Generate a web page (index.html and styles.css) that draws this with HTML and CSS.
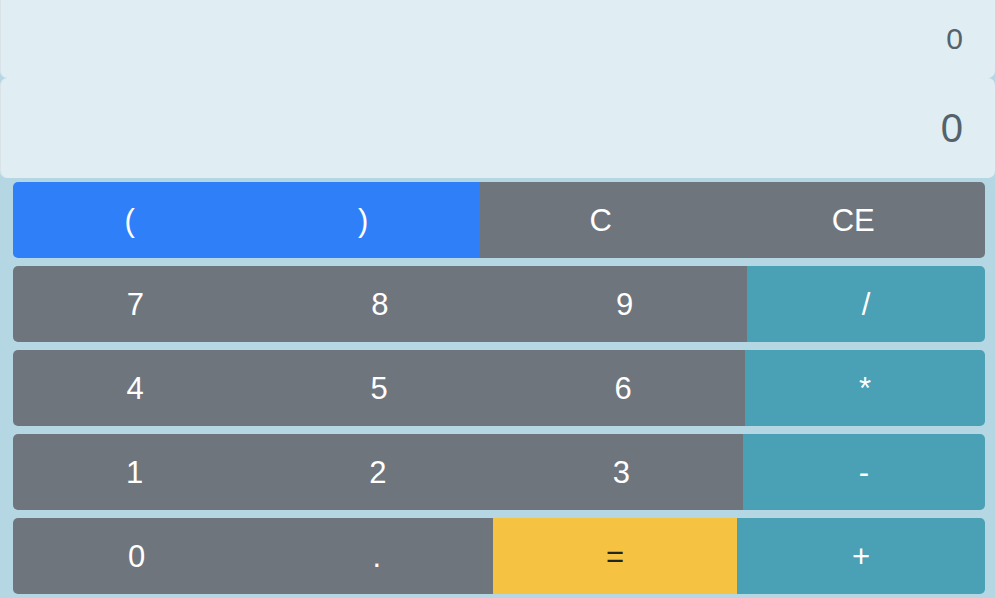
FILE: index.html
```html
<!DOCTYPE html>
<html lang="en">
<head>
<meta charset="utf-8">
<title>Calculator</title>
<link rel="stylesheet" href="styles.css">
</head>
<body>
<div class="calc">
  <div class="display">
    <div class="screen screen-expr">0</div>
    <div class="screen screen-result">0</div>
  </div>
  <div class="keys">
    <div class="row row-1">
      <button class="key key-primary">(</button>
      <button class="key key-primary">)</button>
      <button class="key key-secondary">C</button>
      <button class="key key-secondary">CE</button>
    </div>
    <div class="row row-2">
      <button class="key key-secondary">7</button>
      <button class="key key-secondary">8</button>
      <button class="key key-secondary">9</button>
      <button class="key key-info">/</button>
    </div>
    <div class="row row-3">
      <button class="key key-secondary">4</button>
      <button class="key key-secondary">5</button>
      <button class="key key-secondary">6</button>
      <button class="key key-info">*</button>
    </div>
    <div class="row row-4">
      <button class="key key-secondary">1</button>
      <button class="key key-secondary">2</button>
      <button class="key key-secondary">3</button>
      <button class="key key-info">-</button>
    </div>
    <div class="row row-5">
      <button class="key key-secondary">0</button>
      <button class="key key-secondary">.</button>
      <button class="key key-warning">=</button>
      <button class="key key-info">+</button>
    </div>
  </div>
</div>
</body>
</html>
```
FILE: styles.css
```css
html, body {
  margin: 0;
  padding: 0;
}
body {
  background: #b5d7e3;
  font-family: "Liberation Sans", Arial, sans-serif;
  width: 995px;
  height: 598px;
  overflow: hidden;
}
.calc {
  display: flex;
  flex-direction: column;
}
.display {
  display: flex;
  flex-direction: column;
}
.screen {
  background: #e0edf3;
  color: #53626b;
  display: flex;
  align-items: center;
  justify-content: flex-end;
  padding-right: 32px;
  border-left: 1px solid #d9e2e7;
  box-sizing: border-box;
}
.screen-expr {
  height: 78px;
  font-size: 30px;
  border-radius: 0 0 7px 7px;
}
.screen-result {
  height: 100px;
  font-size: 40px;
  border-radius: 7px;
}
.keys {
  display: flex;
  flex-direction: column;
  gap: 8px;
  padding: 4px 10px 4px 13px;
}
.row {
  display: grid;
  height: 76px;
}
.row-1 { grid-template-columns: 233.5fr 233.5fr 241.4fr 263.6fr; }
.row-2 { grid-template-columns: 244.67fr 244.67fr 244.66fr 238fr; }
.row-3 { grid-template-columns: 244fr 244fr 244fr 240fr; }
.row-4 { grid-template-columns: 243.33fr 243.33fr 243.34fr 242fr; }
.row-5 { grid-template-columns: 247.4fr 232.6fr 244fr 248fr; }
.key {
  border: 0;
  margin: 0;
  padding: 0;
  font-family: inherit;
  font-size: 31px;
  color: #ffffff;
  line-height: 1;
  cursor: pointer;
}
.key:first-child {
  border-radius: 5px 0 0 5px;
}
.key:last-child {
  border-radius: 0 5px 5px 0;
}
.key-primary { background: #2f7ff9; }
.key-secondary { background: #6f757d; }
.key-info { background: #4aa0b5; }
.key-warning { background: #f5c242; color: #212529; }
```
